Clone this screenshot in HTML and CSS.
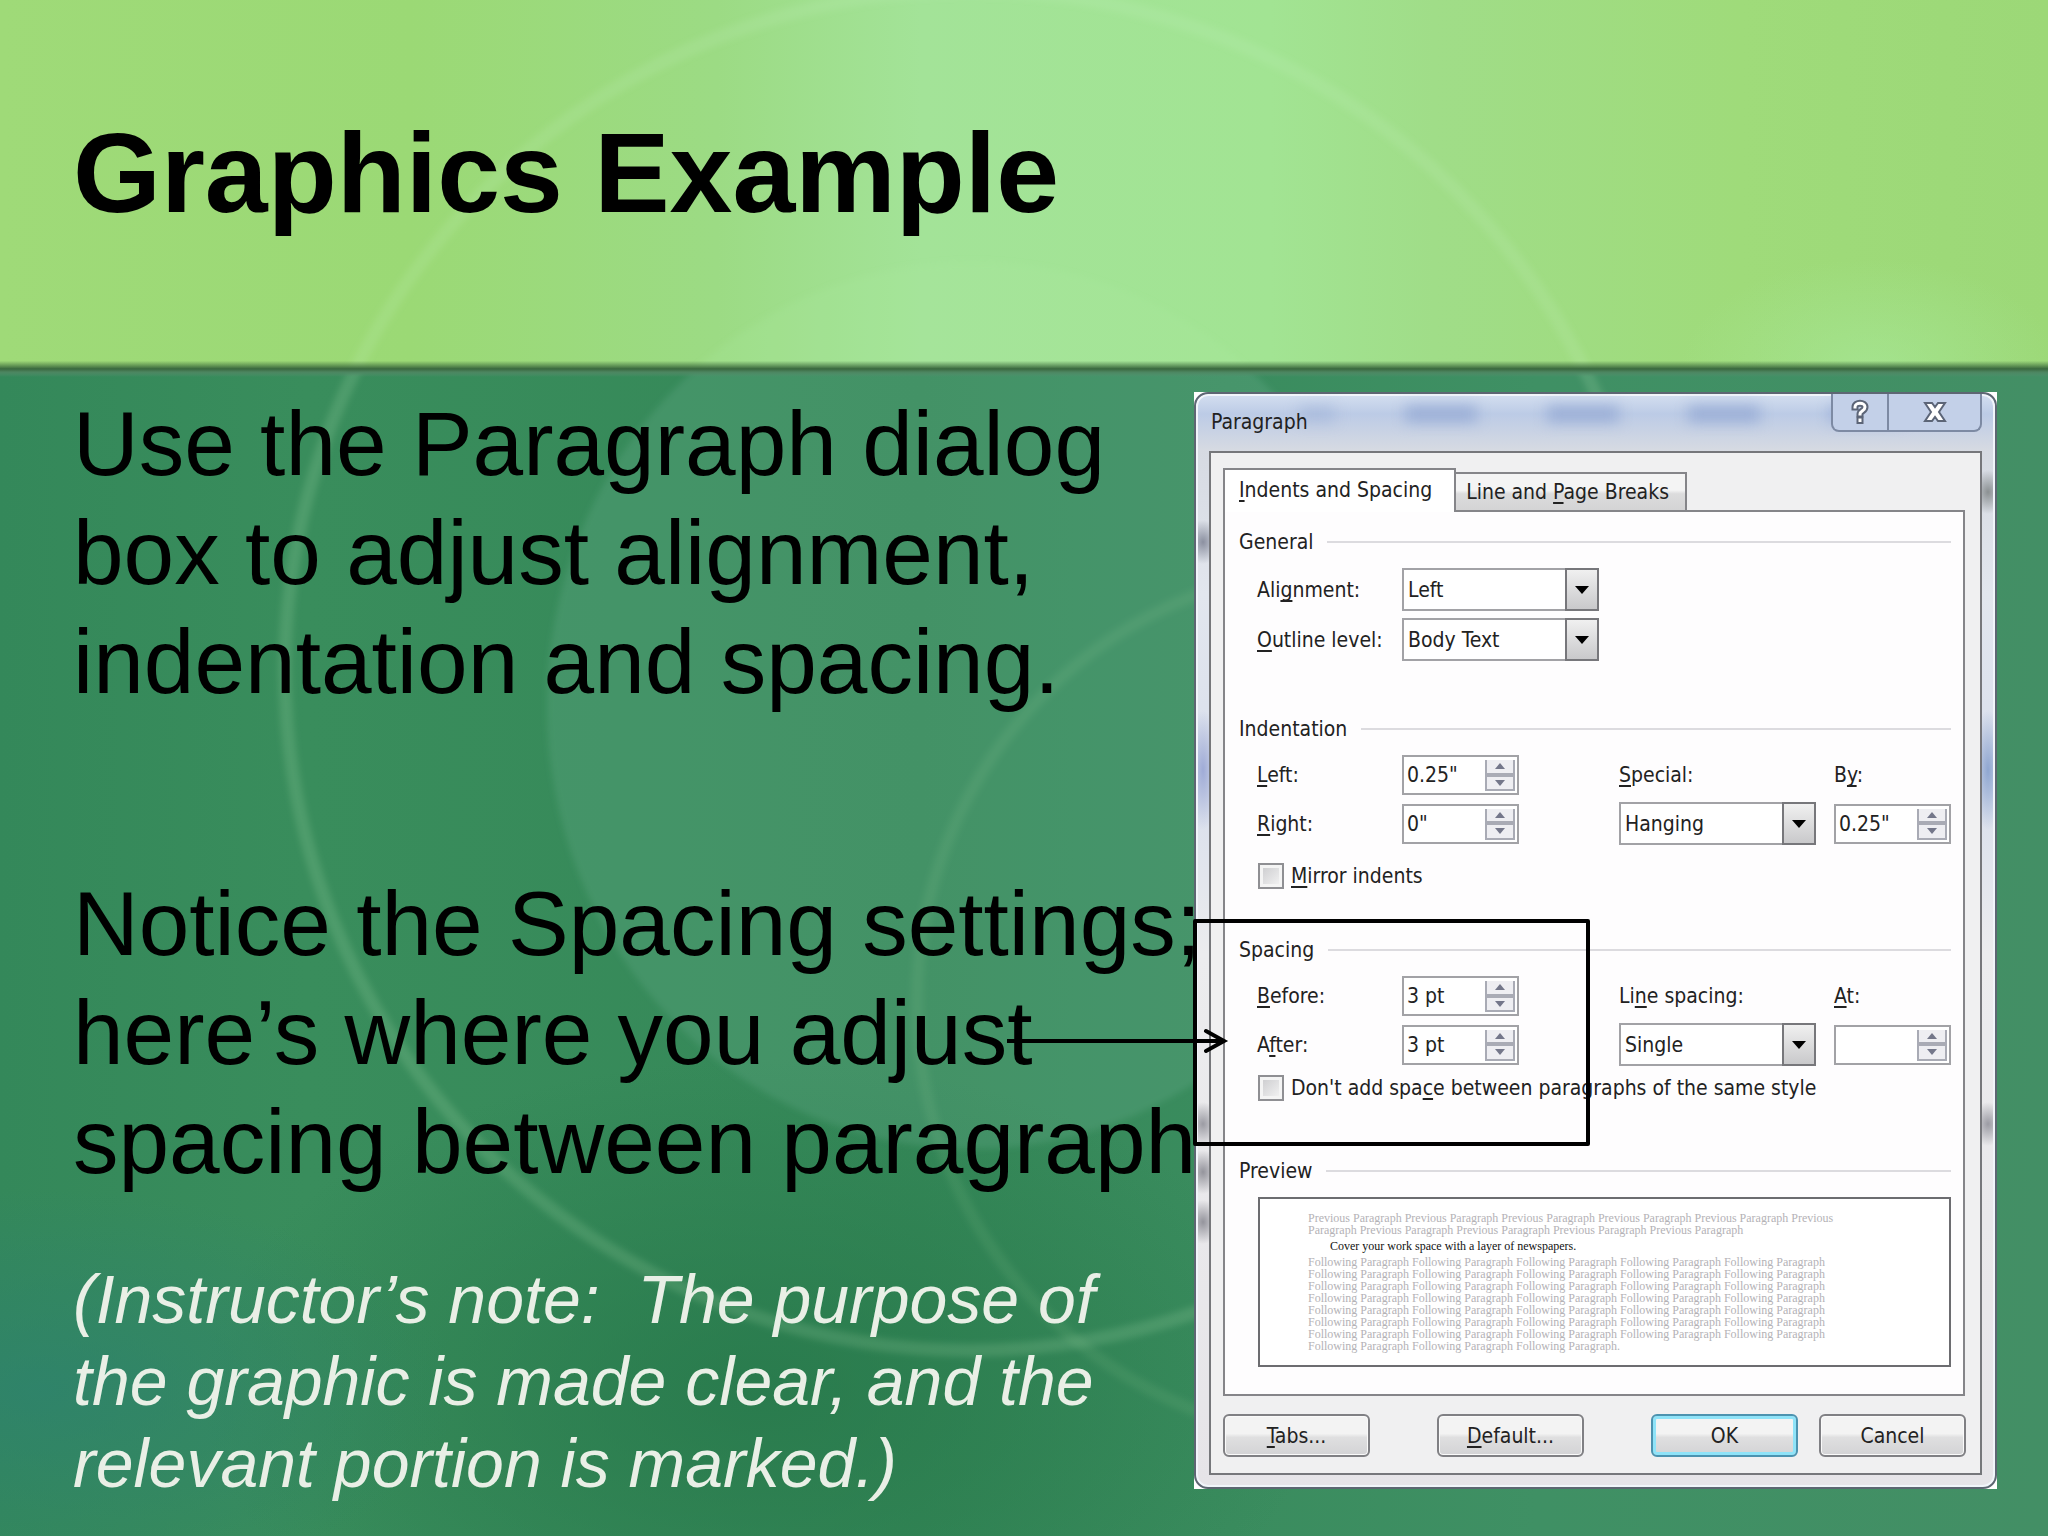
FILE: index.html
```html
<!DOCTYPE html>
<html lang="en">
<head>
<meta charset="UTF-8">
<title>Graphics Example</title>
<link rel="stylesheet" href="styles.css">
</head>

<body>
<div class="slide">
	<svg class="backdrop" viewBox="0 0 2048 1536" preserveAspectRatio="none" aria-hidden="true">
		<defs>
			<linearGradient id="head" x1="0" x2="1" y1="0" y2="0">
				<stop offset="0" stop-color="#9fda78"/>
				<stop offset=".2" stop-color="#9bd975"/>
				<stop offset=".35" stop-color="#9cdb84"/>
				<stop offset=".45" stop-color="#a3e398"/>
				<stop offset=".62" stop-color="#a2e493"/>
				<stop offset=".7" stop-color="#a0dd88"/>
				<stop offset=".85" stop-color="#9fdb7a"/>
				<stop offset="1" stop-color="#9cd877"/>
			</linearGradient>
			<linearGradient id="body" x1="0" x2="1" y1="0" y2="0">
				<stop offset="0" stop-color="#34885a"/>
				<stop offset=".15" stop-color="#398d5c"/>
				<stop offset=".45" stop-color="#358858"/>
				<stop offset=".75" stop-color="#3f9064"/>
				<stop offset="1" stop-color="#438f65"/>
			</linearGradient>
			<linearGradient id="edge" x1="0" x2="0" y1="0" y2="1">
				<stop offset="0" stop-color="#3d6b3c" stop-opacity="0"/>
				<stop offset=".5" stop-color="#3a683e"/>
				<stop offset=".7" stop-color="#4c8560"/>
				<stop offset="1" stop-color="#5a8f70" stop-opacity="0"/>
			</linearGradient>
			<radialGradient id="shade">
				<stop offset="0" stop-color="#247548" stop-opacity=".7"/>
				<stop offset="1" stop-color="#247548" stop-opacity="0"/>
			</radialGradient>
			<radialGradient id="teal">
				<stop offset="0" stop-color="#2d8170" stop-opacity=".7"/>
				<stop offset="1" stop-color="#2d8170" stop-opacity="0"/>
			</radialGradient>
			<radialGradient id="mint">
				<stop offset="0" stop-color="#a8e99c" stop-opacity=".6"/>
				<stop offset="1" stop-color="#a8e99c" stop-opacity="0"/>
			</radialGradient>
			<filter id="soft" x="-5%" y="-5%" width="110%" height="110%"><feGaussianBlur stdDeviation="3"/></filter>
		</defs>
		<rect width="2048" height="366" fill="url(#head)"/>
		<ellipse cx="1870" cy="366" rx="190" ry="110" fill="url(#mint)"/>
		<ellipse cx="972" cy="700" rx="425" ry="440" fill="#a8eba0" fill-opacity=".2" filter="url(#soft)"/>
		<rect y="366" width="2048" height="1170" fill="url(#body)"/>
		<svg y="366" width="2048" height="1170" viewBox="0 366 2048 1170">
			<ellipse cx="760" cy="1380" rx="560" ry="330" fill="url(#shade)"/>
			<ellipse cx="40" cy="1380" rx="420" ry="200" fill="url(#teal)"/>
			<ellipse cx="972" cy="700" rx="425" ry="440" fill="#7fb8a0" fill-opacity=".2" filter="url(#soft)"/>
			<circle cx="1350" cy="995" r="433" fill="none" stroke="#c9efc0" stroke-width="12" stroke-opacity=".08" filter="url(#soft)"/>
		</svg>
		<ellipse cx="970" cy="665" rx="685" ry="675" fill="none" stroke="#c9efc0" stroke-width="13" stroke-opacity=".15" filter="url(#soft)"/>
		<rect y="358" width="2048" height="16" fill="url(#edge)"/>
	</svg>

	<header class="slide-head">
		<h1>Graphics Example</h1>
	</header>

	<main class="slide-body">
		<div class="copy">
			<p>Use the Paragraph dialog<br>box to adjust alignment,<br>indentation and spacing.</p>
			<p>Notice the Spacing settings;<br>here’s where you adjust<br>spacing between paragraph</p>
			<p class="note">(Instructor’s note:&nbsp; The purpose of<br>the graphic is made clear, and the<br>relevant portion is marked.)</p>
		</div>

		<div class="figure">
			<div class="corners">
			<form class="dialog">
				<div class="titlebar">
					<span class="ghosts" aria-hidden="true"><i></i><i></i><i></i><i></i><i></i></span>
					<h2>Paragraph</h2>
					<div class="winbtns">
						<button type="button" aria-label="Help">
							<svg width="20" height="26" viewBox="0 0 20 26"><g fill="none" stroke-linecap="square"><path d="M5 8c0-5 10-5 10 0 0 4-5 4-5 7" stroke="#5c6577" stroke-width="7"/><path d="M10 21v.5" stroke="#5c6577" stroke-width="7"/><path d="M5 8c0-5 10-5 10 0 0 4-5 4-5 7" stroke="#fff" stroke-width="3"/><path d="M10 21v.5" stroke="#fff" stroke-width="3"/></g></svg>
						</button>
						<button type="button" aria-label="Close">
							<svg width="24" height="22" viewBox="0 0 24 22"><path d="M2 2h7l3 4 3-4h7l-6 9 6 9h-7l-3-4-3 4H2l6-9z" fill="#fff" stroke="#5c6577" stroke-width="2"/></svg>
						</button>
					</div>
				</div>

				<div class="client">
					<div class="tabs" role="tablist">
						<button type="button" class="tab active" role="tab" aria-selected="true"><u>I</u>ndents and Spacing</button>
						<button type="button" class="tab" role="tab" aria-selected="false">Line and <u>P</u>age Breaks</button>
					</div>

					<div class="sheet">
						<section>
							<h3>General</h3>
							<div class="fields">
								<label for="align">Ali<u>g</u>nment:</label>
								<span class="combo"><select id="align"><option>Left</option></select><i></i></span>
								<label class="row2" for="outline"><u>O</u>utline level:</label>
								<span class="combo"><select id="outline"><option>Body Text</option></select><i></i></span>
							</div>
						</section>

						<section class="indentation">
							<h3>Indentation</h3>
							<div class="fields">
								<label for="left"><u>L</u>eft:</label>
								<span class="spin"><input id="left" type="text" value='0.25"'><span><button type="button" aria-label="Up"></button><button type="button" aria-label="Down"></button></span></span>
								<label for="special"><u>S</u>pecial:</label>
								<label for="by">B<u>y</u>:</label>
								<label for="right"><u>R</u>ight:</label>
								<span class="spin"><input id="right" type="text" value='0"'><span><button type="button" aria-label="Up"></button><button type="button" aria-label="Down"></button></span></span>
								<span class="combo"><select id="special"><option>Hanging</option></select><i></i></span>
								<span class="spin"><input id="by" type="text" value='0.25"'><span><button type="button" aria-label="Up"></button><button type="button" aria-label="Down"></button></span></span>
							</div>
							<label class="check mirror"><input type="checkbox"><span><u>M</u>irror indents</span></label>
						</section>

						<section class="spacing">
							<h3>Spacing</h3>
							<div class="fields">
								<label for="before"><u>B</u>efore:</label>
								<span class="spin"><input id="before" type="text" value="3 pt"><span><button type="button" aria-label="Up"></button><button type="button" aria-label="Down"></button></span></span>
								<label for="line">Li<u>n</u>e spacing:</label>
								<label for="at"><u>A</u>t:</label>
								<label for="after">A<u>f</u>ter:</label>
								<span class="spin"><input id="after" type="text" value="3 pt"><span><button type="button" aria-label="Up"></button><button type="button" aria-label="Down"></button></span></span>
								<span class="combo"><select id="line"><option>Single</option></select><i></i></span>
								<span class="spin"><input id="at" type="text" value=""><span><button type="button" aria-label="Up"></button><button type="button" aria-label="Down"></button></span></span>
							</div>
							<label class="check"><input type="checkbox"><span>Don't add spa<u>c</u>e between paragraphs of the same style</span></label>
						</section>

						<section class="preview">
							<h3>Preview</h3>
							<div class="page">
								<p>Previous Paragraph Previous Paragraph Previous Paragraph Previous Paragraph Previous Paragraph Previous<br>Paragraph Previous Paragraph Previous Paragraph Previous Paragraph Previous Paragraph</p>
								<p class="current">Cover your work space with a layer of newspapers.</p>
								<p>Following Paragraph Following Paragraph Following Paragraph Following Paragraph Following Paragraph<br>Following Paragraph Following Paragraph Following Paragraph Following Paragraph Following Paragraph<br>Following Paragraph Following Paragraph Following Paragraph Following Paragraph Following Paragraph<br>Following Paragraph Following Paragraph Following Paragraph Following Paragraph Following Paragraph<br>Following Paragraph Following Paragraph Following Paragraph Following Paragraph Following Paragraph<br>Following Paragraph Following Paragraph Following Paragraph Following Paragraph Following Paragraph<br>Following Paragraph Following Paragraph Following Paragraph Following Paragraph Following Paragraph<br>Following Paragraph Following Paragraph Following Paragraph.</p>
							</div>
						</section>
					</div>

					<div class="actions">
						<button type="button" class="btn"><u>T</u>abs...</button>
						<button type="button" class="btn"><u>D</u>efault...</button>
						<button type="button" class="btn ok">OK</button>
						<button type="button" class="btn cancel">Cancel</button>
					</div>
				</div>
			</form>
			</div>

			<!-- marks the Spacing settings -->
			<div class="callout"></div>
			<svg class="arrow" width="222" height="30" viewBox="0 0 222 30" aria-hidden="true">
				<path d="M0 15h216M199 5l18 10-18 10" fill="none" stroke="#000" stroke-width="4" stroke-linecap="round"/>
			</svg>
		</div>
	</main>
</div>
</body>
</html>
```
FILE: styles.css
```css
*{margin:0; padding:0; box-sizing:border-box;}
body{font-family:"Liberation Sans",Arial,sans-serif; color:#000; background:#358858;}
button,input,select{font:inherit; color:inherit;}

.slide{position:relative; min-height:100vh; overflow:hidden;}
.backdrop{position:absolute; top:0; left:0; width:100%; height:100%; z-index:-1;}
.slide-head{height:366px; padding:105px 73px 0;}
.slide-head h1{font-size:113px; line-height:136px; font-weight:bold;}

.slide-body{display:grid; grid-template-columns:minmax(0,1121fr) minmax(0,803fr); padding:23px 51px 44px 73px;}
.copy{white-space:nowrap; font-size:91px; line-height:109px;}
.copy p + p{margin-top:153px;}
.copy p.note{margin-top:62px; font-size:68px; line-height:82px; font-style:italic; color:#e9efe6;}

/* dialog window */
.figure{position:relative; align-self:start; padding-top:3px; font-family:"DejaVu Sans Condensed","Noto Sans",sans-serif; font-size:21px; line-height:30px; color:#222;}
.corners{background:#fff;}
.dialog{
	padding:0 13px 12px; border:2px solid #5d6672; border-radius:14px;
	background:
		radial-gradient(ellipse 16px 22px at 7px 148px,#8b90a0,transparent),
		radial-gradient(ellipse 16px 60px at 7px 376px,#9fabd6,transparent),
		radial-gradient(ellipse 16px 22px at 7px 730px,#9b9ba3,transparent),
		radial-gradient(ellipse 16px 22px at 7px 778px,#94949c,transparent),
		radial-gradient(ellipse 16px 22px at 7px 828px,#94949c,transparent),
		radial-gradient(ellipse 16px 22px at calc(100% - 7px) 98px,#8b9092,transparent),
		radial-gradient(ellipse 16px 60px at calc(100% - 7px) 376px,#8fa6d0,transparent),
		radial-gradient(ellipse 16px 22px at calc(100% - 7px) 730px,#9b9ba3,transparent),
		linear-gradient(#d4dff0,#bccbe6 20px,#d6dae2 56px,#e2e6ee 200px,#d9dfec 400px,#ececee 560px,#e6e4e8);
	box-shadow:inset 0 0 0 2px #f1f5fa;
}
.titlebar{position:relative; display:flex; justify-content:space-between; height:57px;}
.titlebar h2{position:relative; font-size:21px; line-height:30px; font-weight:normal; padding:13px 0 0 2px;}
.ghosts{position:absolute; top:12px; left:90px; right:80px; display:flex; justify-content:space-between; filter:blur(7px);}
.ghosts i{width:72px; height:16px; background:#9aaed6;}
.ghosts i:first-child{width:36px; opacity:.5;}
.winbtns{position:relative; display:flex; height:38px; border:2px solid #7d8aa3; border-top:0; border-radius:0 0 8px 8px; background:#c3d0e8;}
.winbtns button{display:flex; align-items:center; justify-content:center; width:54px; border:0; background:none;}
.winbtns button + button{width:93px; border-left:2px solid #7d8aa3;}

.client{padding:14px 14px 16px 12px; border:2px solid #76777b; background:#f0f0f1;}
.tabs{display:flex; align-items:flex-end; height:43px;}
.tab{height:38px; padding:0 16px 0 10px; border:2px solid #858589; border-left:0; border-bottom:0; background:linear-gradient(#f4f4f4 45%,#dcdcdd 55%,#d4d4d5);}
.tab.active{position:relative; height:44px; margin-bottom:-2px; padding:0 22px 2px 14px; border-left:2px solid #858589; background:#fff;}
.sheet{margin-right:1px; padding:15px 12px 27px 14px; border:2px solid #858589; background:#fefdfe;}

h3{display:flex; align-items:center; gap:14px; font-size:21px; line-height:30px; font-weight:normal;}
h3::after{content:""; flex:1; height:2px; background:#dcdbdf;}
.fields{display:grid; grid-template-columns:145fr 217fr 215fr 117fr; grid-auto-rows:minmax(40px,auto); row-gap:7px; align-items:center; margin:11px 0 0 18px;}
.row2{grid-column:1;}
.indentation{margin-top:53px;}
.spacing{margin-top:46px;}
.preview{margin-top:55px;}
u{text-decoration-thickness:2px; text-underline-offset:3px; text-decoration-skip-ink:none;}

.combo{position:relative; display:block; width:197px;}
.combo select{appearance:none; display:block; width:100%; height:43px; padding:0 38px 0 4px; border:2px solid #a2a2a6; border-radius:0; background:#fff;}
.combo i{position:absolute; top:0; right:0; width:34px; height:43px; border:2px solid #77777b; background:linear-gradient(#f0f0f0,#c9c9cb); pointer-events:none;}
.combo i::after{content:""; display:block; margin:16px auto 0; width:0; border:7px solid transparent; border-top:8px solid #000; border-bottom:0;}

.spin{display:flex; width:117px; height:40px; border:2px solid #a2a2a6; background:#fff;}
.spin input{flex:1; min-width:0; padding:0 3px; border:0; background:none;}
.spin > span{display:flex; flex-direction:column; width:30px; margin:3px 2px 2px 0;}
.spin button{display:flex; flex:1; align-items:center; justify-content:center; border:2px solid #a9abb5; border-top:0; background:#eeeef2;}
.spin button + button{border-top:2px solid #a9abb5;}
.spin button::after{content:""; border:5px solid transparent; border-top:0; border-bottom:6px solid #74778a;}
.spin button + button::after{border-bottom:0; border-top:6px solid #74778a;}

.check{display:flex; align-items:center; gap:7px; height:26px; margin:9px 0 0 19px; white-space:nowrap;}
.check.mirror{margin-top:18px;}
.check input{appearance:none; width:26px; height:26px; border:2px solid #8f8f93; background:linear-gradient(135deg,#c9c9cc,#f6f6f6); box-shadow:inset 0 0 0 3px #f4f4f4;}

.page{margin:11px 0 0 19px; height:170px; padding:13px 0 0 48px; border:2px solid #6c6c70; background:#fff; font-family:"Liberation Serif",serif; font-size:12px; line-height:12px; color:#b4b2b6; white-space:nowrap; overflow:hidden;}
.page .current{margin:4px 0 4px 22px; color:#111;}

.actions{display:flex; gap:21px; margin-top:18px;}
.btn{width:147px; height:43px; border:2px solid #808084; border-radius:6px; background:linear-gradient(#f3f3f3 45%,#dfdfe0 55%,#d3d3d5); box-shadow:inset 0 0 0 1px #fafafa;}
.btn + .btn{margin-left:auto;}
.btn.btn.cancel{margin-left:0;}
.btn.ok{border-color:#4c93b0; box-shadow:inset 0 0 0 3px #8fe3f8;}

.callout{position:absolute; top:530px; left:-1px; width:397px; height:227px; border:4px solid #000; border-radius:2px;}
.arrow{position:absolute; top:637px; left:-187px;}
```
